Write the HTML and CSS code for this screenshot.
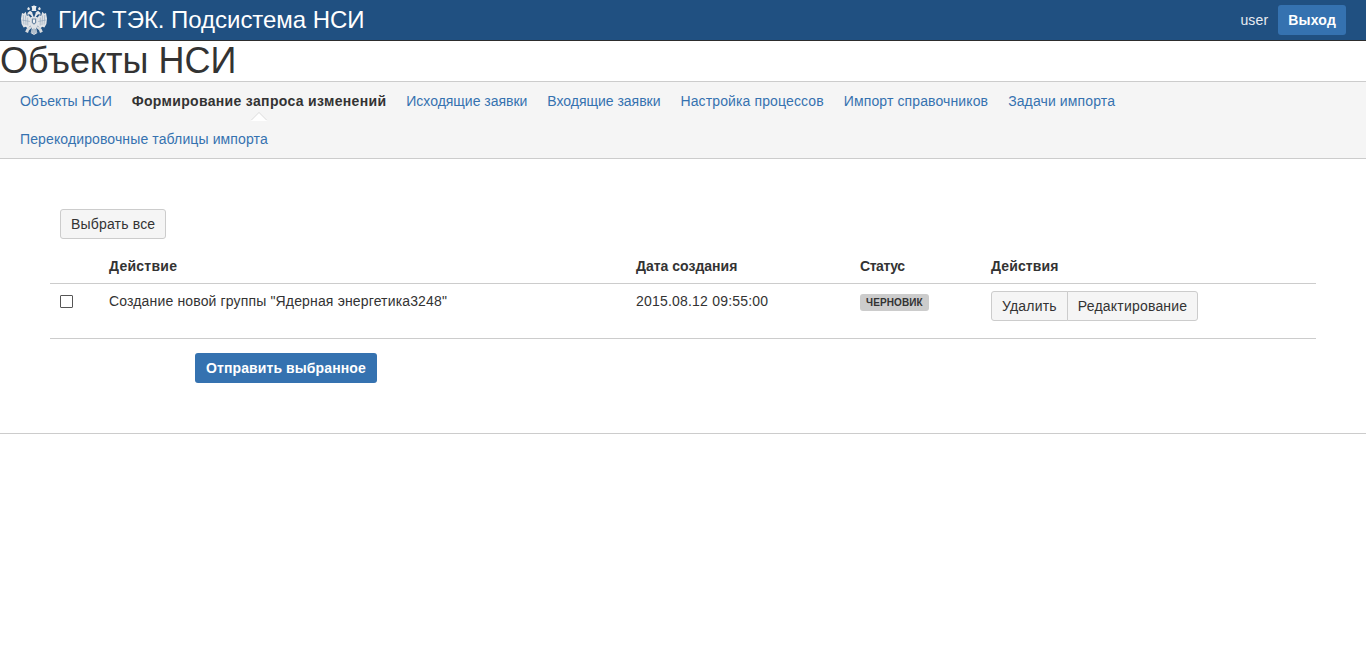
FILE: index.html
```html
<!DOCTYPE html>
<html lang="ru">
<head>
<meta charset="utf-8">
<title>ГИС ТЭК. Подсистема НСИ</title>
<link rel="stylesheet" href="styles.css">
</head>
<body>
<header class="topbar">
  <a class="brand" href="#">
    <svg class="emblem" viewBox="0 0 26 30" width="26" height="30" aria-hidden="true">
      <defs>
        <g id="half">
          <path fill="#e6e8eb" d="M12 13.500C11 11 9.500 10 9 9.200L6.300 9.800l.4-2L9 5.800l2.200 1.400C11.300 9 12.300 10.500 13 12.500z"/>
          <path fill="#e6e8eb" d="M7.500 2l1.300 1.200L8.500 5H6.700L6.300 3.200z"/>
          <path fill="#e0e3e7" d="M11 15L7.800 10.300 5.800 10.800 4.700 6.800 2.900 8.700 1 8 0 13.500l.6 5.500 2 3.500 2.200-.8L7 23.800l2.600-3.500 1.400-3z"/>
          <path fill="none" stroke="#7d96b0" stroke-width=".5" d="M2.300 10l.6 9.500M4.500 10.500l.5 9.500M6.700 12.500l.1 8M1 15l8 1.500"/>
          <path fill="#d6dade" d="M9.500 21L5.500 23.800l-1.300 3 2.800 1.200 1-2.800 2.500-2.200z"/>
        </g>
      </defs>
      <use href="#half"/>
      <use href="#half" transform="matrix(-1 0 0 1 26 0)"/>
      <path fill="#eceef0" d="M10.500.9h5l-.7 3.300.7 1.800h-5l.7-1.800z"/>
      <path fill="#eceef0" d="M13 0l.8 1h-1.600z"/>
      <path fill="#dfe2e6" d="M9.500 12h7l.9 7.500L15.500 23h-5l-1.900-3.500z"/>
      <path fill="#6c87a3" d="M10.800 13.500h4.400v4.300L13 19.800l-2.200-2z"/>
      <path fill="#f4f5f6" d="M12 14.500h2v3l-1 .8-1-.8z"/>
      <path fill="#dfe2e6" d="M10.800 23h4.400l1.100 5L13 30l-3.300-2z"/>
      <path fill="none" stroke="#5f7f9f" stroke-width=".7" d="M13 23.500V29M11.300 24l-.4 4M14.700 24l.4 4"/>
    </svg>
    <span class="brand-name">ГИС ТЭК. Подсистема НСИ</span>
  </a>
  <div class="user-area">
    <span class="user-name">user</span>
    <a class="btn btn-primary btn-logout" href="#">Выход</a>
  </div>
</header>

<h1 class="page-title">Объекты НСИ</h1>

<nav class="subnav">
  <a class="subnav-link" href="#">Объекты НСИ</a>
  <a class="subnav-link is-active" href="#">Формирование запроса изменений</a>
  <a class="subnav-link" href="#">Исходящие заявки</a>
  <a class="subnav-link" href="#">Входящие заявки</a>
  <a class="subnav-link subnav-link-wide" href="#">Настройка процессов</a>
  <a class="subnav-link subnav-link-wide" href="#">Импорт справочников</a>
  <a class="subnav-link subnav-link-wide" href="#">Задачи импорта</a>
  <a class="subnav-link subnav-link-wide" href="#">Перекодировочные таблицы импорта</a>
</nav>

<main class="content">
  <div class="select-row">
    <button class="btn btn-default btn-select" type="button">Выбрать все</button>
  </div>
  <table class="requests">
    <colgroup>
      <col class="col-check">
      <col class="col-action">
      <col class="col-date">
      <col class="col-status">
      <col class="col-actions">
    </colgroup>
    <thead>
      <tr>
        <th></th>
        <th class="th-action">Действие</th>
        <th>Дата создания</th>
        <th class="th-status">Статус</th>
        <th class="th-actions">Действия</th>
      </tr>
    </thead>
    <tbody>
      <tr>
        <td><span class="checkbox"></span></td>
        <td class="td-text">Создание новой группы "Ядерная энергетика3248"</td>
        <td class="td-date">2015.08.12 09:55:00</td>
        <td><span class="label">Черновик</span></td>
        <td>
          <div class="btn-group">
            <button class="btn btn-default btn-delete" type="button">Удалить</button>
            <button class="btn btn-default btn-edit" type="button">Редактирование</button>
          </div>
        </td>
      </tr>
    </tbody>
  </table>
  <div class="send-row">
    <button class="btn btn-primary btn-send" type="button">Отправить выбранное</button>
  </div>
</main>
<hr class="page-rule">
</body>
</html>
```
FILE: styles.css
```css
* {
  box-sizing: border-box;
}

html,
body {
  margin: 0;
  background: #fff;
}

body {
  font-family: "Liberation Sans", Arial, sans-serif;
  font-size: 14px;
  line-height: 20px;
  color: #333;
}

a {
  text-decoration: none;
}

.topbar {
  display: flex;
  align-items: center;
  justify-content: space-between;
  height: 41px;
  padding: 0 20px 0 21px;
  background: #205081;
  border-bottom: 1px solid #2d2d2d;
}

.brand {
  display: flex;
  align-items: center;
  gap: 11px;
  color: #fff;
}

.emblem {
  display: block;
  flex: none;
}

.brand-name {
  font-size: 24px;
  line-height: 26px;
  letter-spacing: -0.04px;
}

.user-area {
  display: flex;
  align-items: center;
  gap: 10px;
}

.user-name {
  color: #e8edf3;
  letter-spacing: 0.15px;
}

.btn {
  display: inline-block;
  height: 30px;
  padding: 4px 10px;
  border: 1px solid transparent;
  border-radius: 3px;
  font-family: inherit;
  font-size: 14px;
  line-height: 20px;
  white-space: nowrap;
}

.btn-primary {
  background: #3572b0;
  color: #fff;
  font-weight: 700;
}

.btn-logout {
  padding: 4px 9px;
  letter-spacing: 0.2px;
}

.btn-send {
  letter-spacing: 0.1px;
}

.btn-default {
  background: #f5f5f5;
  border-color: #ccc;
  color: #333;
}

.btn-select {
  letter-spacing: 0.18px;
}

.btn-delete {
  letter-spacing: 0.2px;
}

.btn-edit {
  letter-spacing: 0.2px;
}

.page-title {
  margin: 0;
  height: 40px;
  font-size: 36px;
  font-weight: 400;
  line-height: 40px;
  color: #333;
}

.subnav {
  display: flex;
  flex-wrap: wrap;
  align-content: flex-start;
  column-gap: 20px;
  height: 78px;
  padding: 0 20px;
  background: #f5f5f5;
  border-top: 1px solid #ccc;
  border-bottom: 1px solid #ccc;
}

.subnav-link {
  position: relative;
  height: 38px;
  line-height: 38px;
  color: #3572b0;
  letter-spacing: -0.02px;
}

.subnav-link-wide {
  letter-spacing: 0.12px;
}

.subnav-link.is-active {
  font-weight: 700;
  color: #333;
  letter-spacing: 0.33px;
}

.subnav-link.is-active::before,
.subnav-link.is-active::after {
  content: "";
  position: absolute;
  left: 50%;
  bottom: 0;
  margin-left: -8px;
  border-left: 8px solid transparent;
  border-right: 8px solid transparent;
  border-bottom: 8px solid #dcdcdc;
}

.subnav-link.is-active::after {
  bottom: -1px;
  border-bottom-color: #fff;
}

.content {
  padding: 50px 50px 50px;
}

.select-row {
  padding-left: 10px;
  margin-bottom: 10px;
}

.requests {
  width: 100%;
  border-collapse: collapse;
  table-layout: fixed;
}

.col-check {
  width: 49px;
}

.col-action {
  width: 527px;
}

.col-date {
  width: 224px;
}

.col-status {
  width: 131px;
}

.requests th {
  height: 34px;
  padding: 7px 10px;
  border-bottom: 1px solid #ccc;
  text-align: left;
  font-weight: 700;
}

.requests .th-action {
  letter-spacing: 0.25px;
}

.requests .th-status {
  letter-spacing: -0.45px;
}

.requests .th-actions {
  letter-spacing: 0.12px;
}

.requests td {
  height: 55px;
  padding: 7px 10px;
  border-bottom: 1px solid #ccc;
  vertical-align: top;
}

.requests .td-text {
  letter-spacing: 0.15px;
}

.requests .td-date {
  letter-spacing: 0.2px;
}

.checkbox {
  display: block;
  width: 13px;
  height: 13px;
  margin-top: 4px;
  border: 1px solid #555;
  border-radius: 1px;
  background: #fff;
}

.label {
  display: inline-block;
  height: 17px;
  margin-top: 3px;
  padding: 0 6px;
  border-radius: 3px;
  background: #ccc;
  color: #333;
  font-size: 10px;
  font-weight: 700;
  line-height: 17px;
  letter-spacing: 0.12px;
  text-transform: uppercase;
  vertical-align: top;
}

.btn-group {
  display: flex;
}

.btn-group .btn:first-child {
  border-radius: 3px 0 0 3px;
}

.btn-group .btn:last-child {
  margin-left: -1px;
  border-radius: 0 3px 3px 0;
}

.send-row {
  padding: 14px 0 0 145px;
}

.page-rule {
  height: 1px;
  margin: 0;
  border: 0;
  background: #ccc;
}
```
